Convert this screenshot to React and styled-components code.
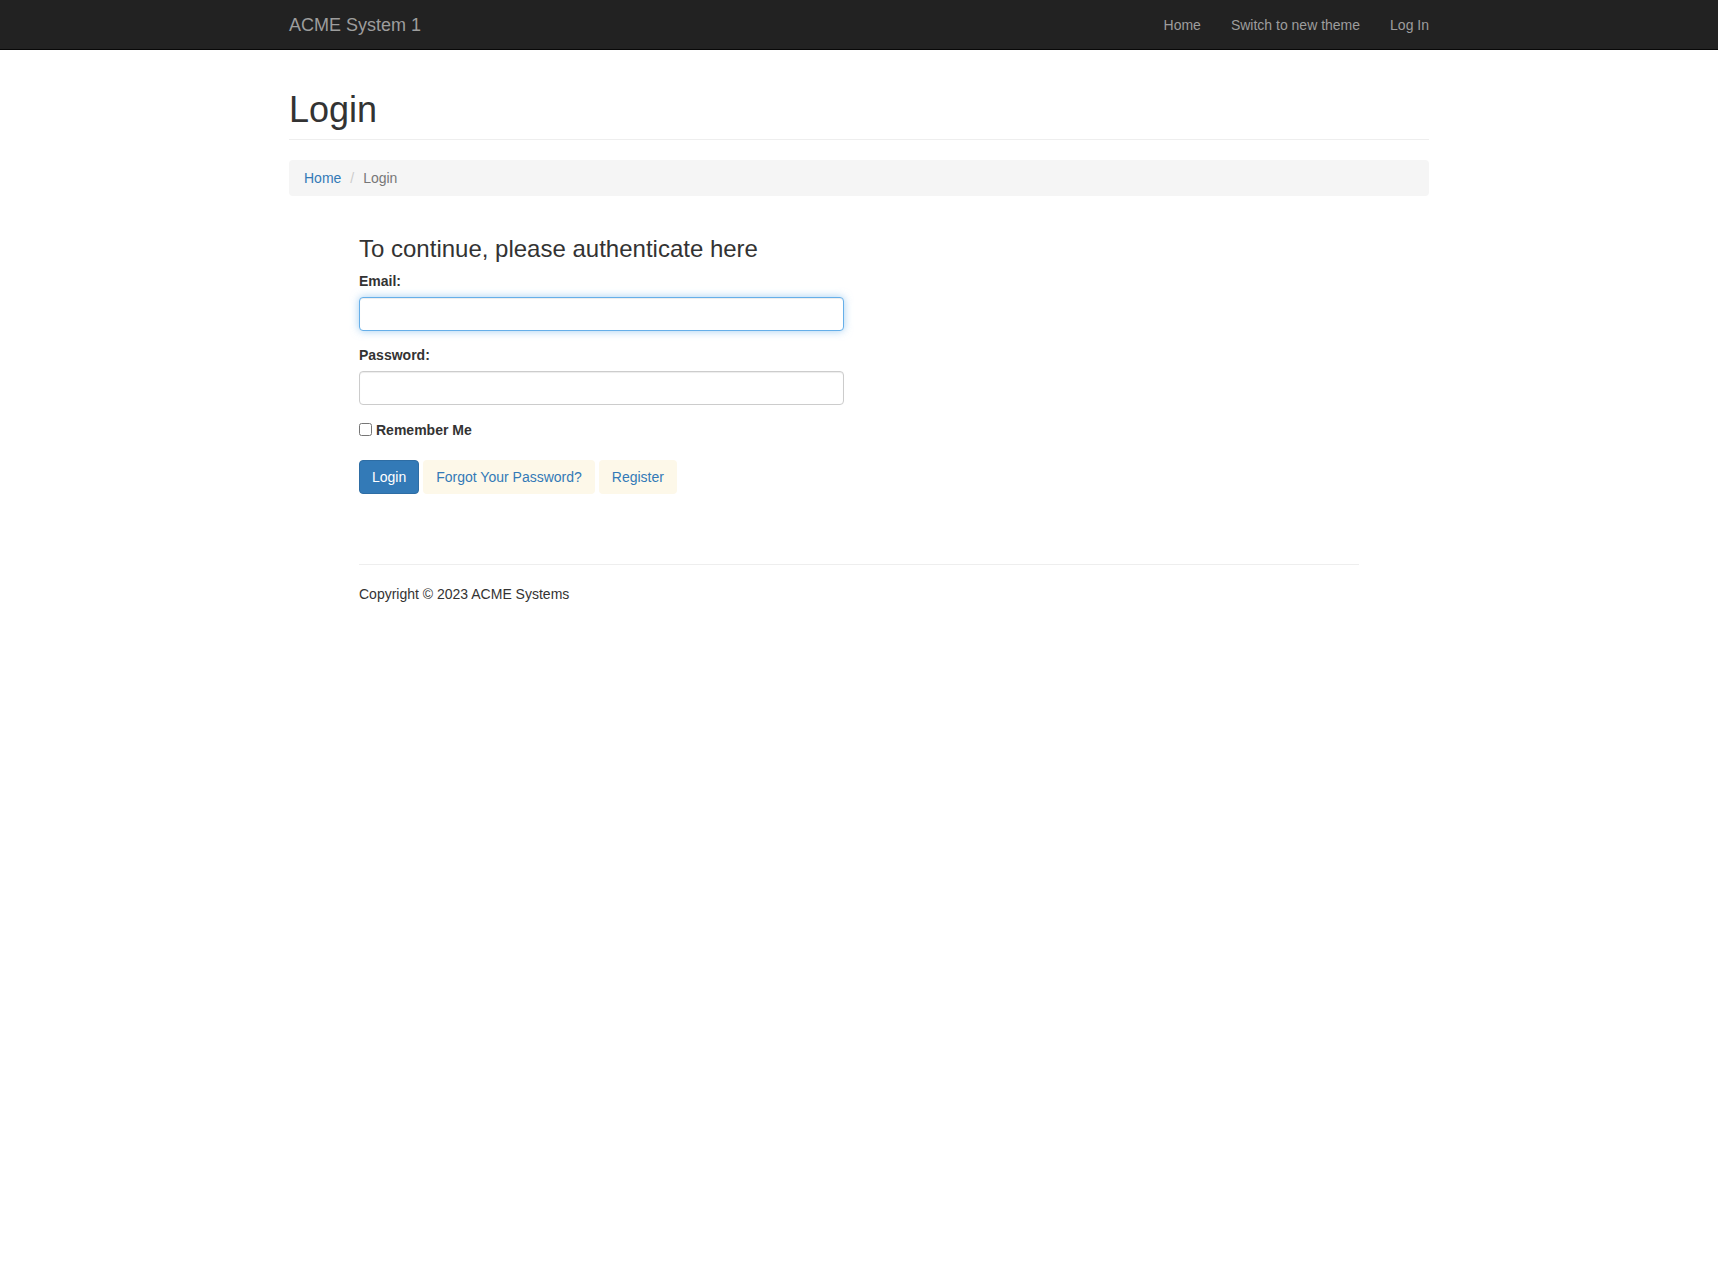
import React, { useState } from "react";
import styled, { createGlobalStyle } from "styled-components";

const GlobalStyle = createGlobalStyle`
  * {
    box-sizing: border-box;
  }
  body {
    margin: 0;
    font-family: "Liberation Sans", Arial, Helvetica, sans-serif;
    font-size: 14px;
    line-height: 1.42857;
    color: #333;
    background: #fff;
  }
`;

function App() {
  const [email, setEmail] = useState("");
  const [password, setPassword] = useState("");
  const [remember, setRemember] = useState(false);

  return (
    <>
      <GlobalStyle />
      <Navbar>
        <NavContainer>
          <Brand href="#">ACME System 1</Brand>
          <NavLinks>
            <NavLink href="#">Home</NavLink>
            <NavLink href="#">Switch to new theme</NavLink>
            <NavLink href="#">Log In</NavLink>
          </NavLinks>
        </NavContainer>
      </Navbar>

      <Container>
        <PageHeader>Login</PageHeader>
        <Breadcrumb>
          <Crumb href="#">Home</Crumb>
          <Separator>/{"\u00a0"}</Separator>
          <ActiveCrumb>Login</ActiveCrumb>
        </Breadcrumb>

        <Inner>
          <FormColumn>
            <Heading>To continue, please authenticate here</Heading>
            <FormGroup>
              <Label htmlFor="email">Email:</Label>
              <Input
                id="email"
                type="email"
                value={email}
                onChange={(e) => setEmail(e.target.value)}
                $focused
              />
            </FormGroup>
            <FormGroup>
              <Label htmlFor="password">Password:</Label>
              <Input
                id="password"
                type="password"
                value={password}
                onChange={(e) => setPassword(e.target.value)}
              />
            </FormGroup>
            <CheckRow>
              <input
                type="checkbox"
                checked={remember}
                onChange={(e) => setRemember(e.target.checked)}
              />
              <span>Remember Me</span>
            </CheckRow>
            <ButtonRow>
              <Button $primary>Login</Button>
              <Button>Forgot Your Password?</Button>
              <Button>Register</Button>
            </ButtonRow>
          </FormColumn>

          <Footer>
            <p>Copyright © 2023 ACME Systems</p>
          </Footer>
        </Inner>
      </Container>
    </>
  );
}

export default App;

const Navbar = styled.nav`
  height: 50px;
  background-color: #222;
  border-bottom: 1px solid #080808;
`;

const NavContainer = styled.div`
  width: 1170px;
  margin: 0 auto;
  padding: 0 15px;
  height: 100%;
  display: flex;
  justify-content: space-between;
  align-items: center;
`;

const Brand = styled.a`
  font-size: 18px;
  line-height: 20px;
  color: #9d9d9d;
  text-decoration: none;
`;

const NavLinks = styled.div`
  display: flex;
  margin-right: -15px;
`;

const NavLink = styled.a`
  padding: 15px;
  line-height: 20px;
  color: #9d9d9d;
  text-decoration: none;
  &:hover {
    color: #fff;
  }
`;

const Container = styled.div`
  width: 1170px;
  margin: 0 auto;
  padding: 40px 15px 0;
`;

const PageHeader = styled.h1`
  margin: 0;
  padding-bottom: 9px;
  font-size: 36px;
  font-weight: 500;
  line-height: 1.1;
  border-bottom: 1px solid #eee;
`;

const Breadcrumb = styled.div`
  margin: 20px 0;
  padding: 8px 15px;
  background-color: #f5f5f5;
  border-radius: 4px;
  line-height: 20px;
`;

const Crumb = styled.a`
  color: #337ab7;
  text-decoration: none;
`;

const Separator = styled.span`
  margin-left: 4px;
  padding: 0 5px;
  color: #ccc;
`;

const ActiveCrumb = styled.span`
  color: #777;
`;

const Inner = styled.div`
  width: 1000px;
  margin: 0 auto;
  padding-top: 20px;
`;

const FormColumn = styled.div`
  width: 485px;
`;

const Heading = styled.h3`
  margin: 0 0 10px;
  font-size: 24px;
  font-weight: 500;
  line-height: 1.1;
`;

const FormGroup = styled.div`
  margin-bottom: 15px;
`;

const Label = styled.label`
  display: block;
  margin-bottom: 5px;
  font-weight: 700;
`;

const Input = styled.input`
  display: block;
  width: 100%;
  height: 34px;
  padding: 6px 12px;
  font-size: 14px;
  font-family: inherit;
  color: #555;
  background-color: #fff;
  border: 1px solid ${(p) => (p.$focused ? "#66afe9" : "#ccc")};
  border-radius: 4px;
  box-shadow: inset 0 1px 1px rgba(0, 0, 0, 0.075)
    ${(p) => (p.$focused ? ", 0 0 8px rgba(102, 175, 233, 0.6)" : "")};
  outline: 0;
  &:focus {
    border-color: #66afe9;
    box-shadow: inset 0 1px 1px rgba(0, 0, 0, 0.075), 0 0 8px rgba(102, 175, 233, 0.6);
  }
`;

const CheckRow = styled.label`
  display: flex;
  align-items: center;
  gap: 4px;
  margin-top: 2px;
  line-height: 20px;
  font-weight: 700;
  input {
    margin: 0;
    width: 13px;
    height: 13px;
  }
`;

const ButtonRow = styled.div`
  display: flex;
  gap: 4px;
  margin-top: 20px;
`;

const Button = styled.button`
  height: 34px;
  padding: 6px 12px;
  font-size: 14px;
  font-family: inherit;
  line-height: 20px;
  border-radius: 4px;
  cursor: pointer;
  color: ${(p) => (p.$primary ? "#fff" : "#337ab7")};
  background-color: ${(p) => (p.$primary ? "#337ab7" : "#fdf8e9")};
  border: 1px solid ${(p) => (p.$primary ? "#2e6da4" : "transparent")};
  &:hover {
    background-color: ${(p) => (p.$primary ? "#286090" : "#faf0d0")};
  }
`;

const Footer = styled.footer`
  margin-top: 70px;
  border-top: 1px solid #eee;
  padding-top: 20px;
  p {
    margin: 0;
  }
`;
